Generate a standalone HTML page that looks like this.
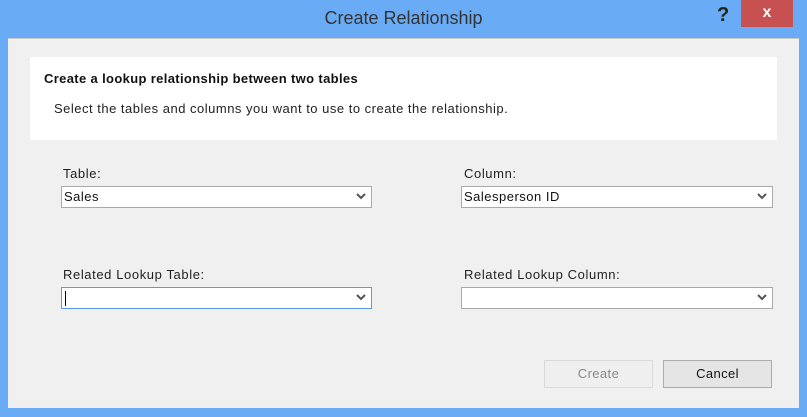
<!DOCTYPE html>
<html><head><style>
body{margin:0;width:807px;height:417px;background:#6aabf5;position:relative;overflow:hidden;font-family:"Liberation Sans",sans-serif;}
.title{position:absolute;left:0;top:8px;width:807px;text-align:center;font-size:18px;color:#333;}
.help{position:absolute;left:717px;top:4px;font-size:20px;font-weight:bold;color:#222;}
.close{position:absolute;left:741px;top:0;width:52px;height:27px;background:#c75050;color:#fff;text-align:center;font-size:16px;font-weight:bold;line-height:26px;}
.content{position:absolute;left:8px;top:38px;width:791px;height:369px;background:#f0f0f0;border-top:1px solid #c8c8c8;}
.panel{position:absolute;left:22px;top:18px;width:747px;height:83px;background:#fff;}
.h{position:absolute;left:14px;top:14px;font-size:13px;font-weight:bold;color:#111;letter-spacing:0.35px;}
.s{position:absolute;left:24px;top:44px;font-size:13px;color:#222;letter-spacing:0.5px;}
.lbl{position:absolute;font-size:13px;color:#222;letter-spacing:0.6px;}
.sel{position:absolute;height:20px;background:#fff;border:1px solid #a9a9a9;font-size:13px;line-height:20px;padding-left:2px;box-sizing:content-box;color:#111;letter-spacing:0.5px;}
.sel svg{position:absolute;right:5px;top:6px;}
.btn{position:absolute;top:321px;width:107px;height:26px;border:1px solid #acacac;background:#e5e5e5;text-align:center;line-height:26px;font-size:13px;color:#111;letter-spacing:0.4px;}
</style></head><body>
<div class="title">Create Relationship</div>
<div class="help">?</div>
<div class="close">x</div>
<div class="content">
 <div class="panel"><div class="h">Create a lookup relationship between two tables</div><div class="s">Select the tables and columns you want to use to create the relationship.</div></div>
 <div class="lbl" style="left:55px;top:127px">Table:</div>
 <div class="sel" style="left:53px;top:147px;width:307px">Sales<svg width="10" height="7"><path d="M1 1L5 5L9 1" stroke="#555" stroke-width="2" fill="none"/></svg></div>
 <div class="lbl" style="left:456px;top:127px">Column:</div>
 <div class="sel" style="left:453px;top:147px;width:308px">Salesperson ID<svg width="10" height="7"><path d="M1 1L5 5L9 1" stroke="#555" stroke-width="2" fill="none"/></svg></div>
 <div class="lbl" style="left:55px;top:228px">Related Lookup Table:</div>
 <div class="sel" style="left:53px;top:248px;width:307px;border-color:#569de5"><span style="display:inline-block;width:1px;height:15px;background:#000;vertical-align:middle;margin-left:1px"></span><svg width="10" height="7"><path d="M1 1L5 5L9 1" stroke="#555" stroke-width="2" fill="none"/></svg></div>
 <div class="lbl" style="left:456px;top:228px">Related Lookup Column:</div>
 <div class="sel" style="left:453px;top:248px;width:308px"><svg width="10" height="7"><path d="M1 1L5 5L9 1" stroke="#555" stroke-width="2" fill="none"/></svg></div>
 <div class="btn" style="left:536px;border-color:#d9d9d9;background:#efefef;color:#888">Create</div>
 <div class="btn" style="left:655px">Cancel</div>
</div>
</body></html>
